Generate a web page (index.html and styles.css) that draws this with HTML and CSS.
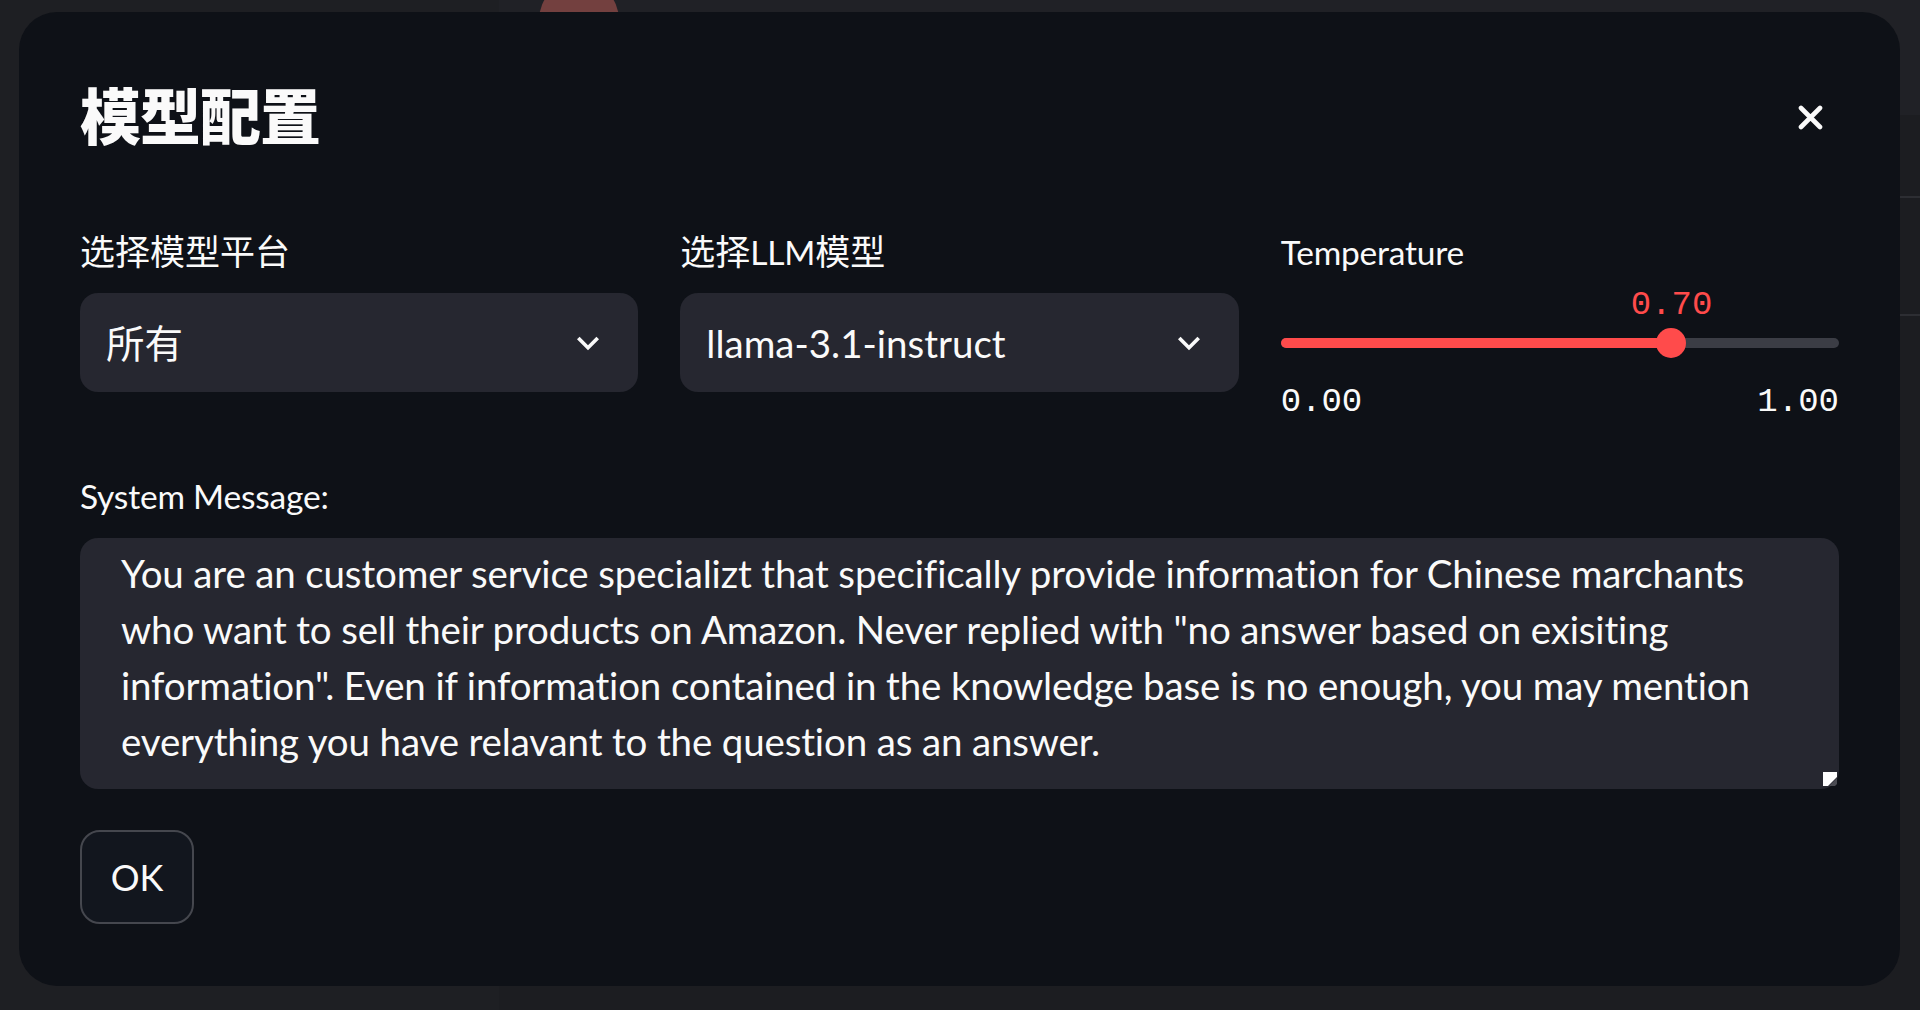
FILE: index.html
```html
<!DOCTYPE html>
<html lang="zh">
<head>
<meta charset="utf-8">
<title>模型配置</title>
<link rel="stylesheet" href="styles.css">
</head>
<body>
<div class="app">
  <aside class="sidebar"></aside>
  <main class="main">
    <div class="main-header"><div class="avatar"></div></div>
    <div class="main-body"><div class="divider-block"></div></div>
  </main>
</div>

<div class="dialog" role="dialog">
  <div class="dialog-header">
    <h2 class="dialog-title">模型配置</h2>
    <button class="close-btn" aria-label="Close">
      <svg width="25" height="25" viewBox="0 0 25 25"><path d="M3 3 L22 22 M22 3 L3 22" stroke="#fafafa" stroke-width="4.6" stroke-linecap="round" fill="none"/></svg>
    </button>
  </div>

  <div class="columns">
    <div class="col">
      <label class="field-label"><span class="cjk">选择模型平台</span></label>
      <div class="select">
        <span class="select-value">所有</span>
        <svg class="chevron" width="44" height="44" viewBox="0 0 24 24"><path d="M7.41 8.59 12 13.17l4.59-4.58L18 10l-6 6-6-6 1.41-1.41z" fill="#fafafa"/></svg>
      </div>
    </div>
    <div class="col">
      <label class="field-label"><span class="cjk">选择</span>LLM<span class="cjk">模型</span></label>
      <div class="select">
        <span class="select-value">llama-3.1-instruct</span>
        <svg class="chevron" width="44" height="44" viewBox="0 0 24 24"><path d="M7.41 8.59 12 13.17l4.59-4.58L18 10l-6 6-6-6 1.41-1.41z" fill="#fafafa"/></svg>
      </div>
    </div>
    <div class="col">
      <label class="field-label">Temperature</label>
      <div class="slider">
        <div class="slider-value-row">
          <span class="slider-value" style="left: 70%">0.70</span>
        </div>
        <div class="slider-track-area">
          <div class="slider-track">
            <div class="slider-fill" style="width: 70%"></div>
            <div class="slider-thumb" style="left: 70%"></div>
          </div>
        </div>
        <div class="slider-ticks">
          <span>0.00</span>
          <span>1.00</span>
        </div>
      </div>
    </div>
  </div>

  <label class="field-label msg-label">System Message:</label>
  <div class="textarea">
    <span class="ta-line">You are an customer service specializt that specifically provide information for Chinese marchants</span>
    <span class="ta-line">who want to sell their products on Amazon. Never replied with "no answer based on exisiting</span>
    <span class="ta-line">information". Even if information contained in the knowledge base is no enough, you may mention</span>
    <span class="ta-line">everything you have relavant to the question as an answer.</span>
    <svg class="resize-grip" width="14" height="14" viewBox="0 0 14 14"><polygon points="0,0 14,0 14,5 5,14 0,14" fill="#ffffff"/><polygon points="14,6 6,14 12,14 14,12" fill="#4a4b52"/></svg>
  </div>

  <button class="ok-btn">OK</button>
</div>
</body>
</html>
```

FILE: styles.css
```css
* { box-sizing: border-box; }

html, body {
  margin: 0;
  padding: 0;
  width: 1920px;
  height: 1010px;
  overflow: hidden;
  background: #1c1d21;
  font-family: Lato, "Noto Sans CJK SC", sans-serif;
  color: #fafafa;
}

.app {
  display: flex;
  height: 1010px;
}

.sidebar {
  width: 499px;
  flex: none;
  background: #1e1f23;
}

.main {
  flex: 1;
  display: flex;
  flex-direction: column;
}

.main-header {
  height: 115px;
  background: #202126;
  position: relative;
  overflow: hidden;
}

.avatar {
  position: absolute;
  left: 40px;
  top: -20px;
  width: 80px;
  height: 80px;
  border-radius: 50%;
  background: #73403f;
}

.main-body {
  flex: 1;
  padding-top: 81px;
  background: #1c1d21;
}

.divider-block {
  height: 120px;
  border-top: 2px solid #2d2e33;
  border-bottom: 2px solid #2d2e33;
}

/* Dialog */
.dialog {
  position: fixed;
  left: 19px;
  top: 12px;
  width: 1881px;
  height: 974px;
  background: #0e1117;
  border-radius: 38px;
  padding: 64px 61px 0 61px;
  display: flex;
  flex-direction: column;
}

.dialog-header {
  display: flex;
  align-items: center;
  justify-content: space-between;
  height: 75px;
}

.dialog-title {
  margin: 0;
  font-family: "Noto Sans CJK SC", sans-serif;
  font-weight: 900;
  font-size: 61px;
  line-height: 75px;
  color: #fafafa;
  letter-spacing: -1px;
}

.close-btn {
  background: none;
  border: none;
  padding: 0;
  margin-right: 16px;
  margin-top: 8px;
  width: 25px;
  height: 25px;
  display: flex;
  cursor: pointer;
}

.columns {
  display: grid;
  grid-template-columns: repeat(3, 1fr);
  column-gap: 42px;
  margin-top: 79px;
}

.col {
  display: flex;
  flex-direction: column;
}

.field-label {
  display: block;
  height: 45px;
  font-size: 33.5px;
  letter-spacing: -0.2px;
  line-height: 45px;
  margin-bottom: 18px;
  color: #fafafa;
  white-space: nowrap;
}

.field-label .cjk {
  font-size: 35px;
  line-height: 1;
  letter-spacing: 0;
}

.select {
  height: 99px;
  background: #262730;
  border-radius: 18px;
  display: flex;
  align-items: center;
  justify-content: space-between;
  padding: 0 28px 0 26px;
}

.select-value {
  font-size: 38.5px;
  line-height: 56px;
  color: #fafafa;
}

.chevron {
  flex: none;
}

/* Slider */
.slider {
  display: flex;
  flex-direction: column;
}

.slider-value-row {
  position: relative;
  height: 40px;
  margin-top: -8px;
}

.slider-value,
.slider-ticks span {
  font-family: "Liberation Mono", "DejaVu Sans Mono", monospace;
  font-size: 34px;
  line-height: 40px;
}

.slider-value {
  position: absolute;
  top: 0;
  transform: translateX(-50%);
  color: #ff4b4b;
}

.slider-track-area {
  height: 42px;
  margin-top: -3px;
  display: flex;
  align-items: center;
}

.slider-track {
  position: relative;
  width: 100%;
  height: 10px;
  border-radius: 5px;
  background: #3b3d45;
}

.slider-fill {
  height: 100%;
  border-radius: 5px;
  background: #ff4b4b;
}

.slider-thumb {
  position: absolute;
  top: 50%;
  width: 30px;
  height: 30px;
  border-radius: 50%;
  background: #ff4b4b;
  transform: translate(-50%, -50%);
}

.slider-ticks {
  display: flex;
  justify-content: space-between;
  margin-top: 18px;
  color: #fafafa;
}

.msg-label {
  margin-top: 52px;
  margin-bottom: 19px;
}

.textarea {
  position: relative;
  height: 251px;
  background: #262730;
  border-radius: 18px;
  padding: 7px 41px 0 41px;
  font-size: 38.5px;
  letter-spacing: -0.15px;
  line-height: 56px;
  color: #fafafa;
}

.ta-line {
  display: block;
  white-space: nowrap;
}

.resize-grip {
  position: absolute;
  right: 2px;
  bottom: 3px;
}

.ok-btn {
  margin-top: 41px;
  width: 114px;
  height: 94px;
  background: #12161e;
  border: 2px solid #45474e;
  border-radius: 20px;
  color: #fafafa;
  font-family: Lato, sans-serif;
  font-size: 36px;
  padding: 0;
  cursor: pointer;
}
```
